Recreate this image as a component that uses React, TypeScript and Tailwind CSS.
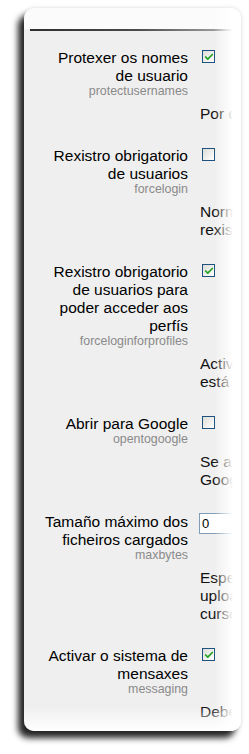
import { Check } from 'lucide-react'

interface Setting {
  label: string
  name: string
  kind: 'checkbox' | 'text'
  checked?: boolean
  value?: string
  description: string[]
}

const settings: Setting[] = [
  {
    label: 'Protexer os nomes de usuario',
    name: 'protectusernames',
    kind: 'checkbox',
    checked: true,
    description: ['Por defecto forgot_password.php non amosa pistas'],
  },
  {
    label: 'Rexistro obrigatorio de usuarios',
    name: 'forcelogin',
    kind: 'checkbox',
    description: [
      'Normalmente, a páxina principal e as listas de cursos poden lerse sen',
      'rexistrarse no sitio. Active esta opción para obrigar a identificarse.',
    ],
  },
  {
    label: 'Rexistro obrigatorio de usuarios para poder acceder aos perfís',
    name: 'forceloginforprofiles',
    kind: 'checkbox',
    checked: true,
    description: [
      'Active esta opción para obrigar a que o usuario',
      'está rexistrado antes de ver os perfís dos demais.',
    ],
  },
  {
    label: 'Abrir para Google',
    name: 'opentogoogle',
    kind: 'checkbox',
    description: [
      'Se activa esta opción, permitirá que o robot de',
      'Google entre no sitio como convidado.',
    ],
  },
  {
    label: 'Tamaño máximo dos ficheiros cargados',
    name: 'maxbytes',
    kind: 'text',
    value: '0',
    description: [
      'Especifica o tamaño máximo dos ficheiros que se poden',
      'uploaded ao sitio. Este valor está limitado polo PHP e',
      'curso a curso pode restrinxirse máis.',
    ],
  },
  {
    label: 'Activar o sistema de mensaxes',
    name: 'messaging',
    kind: 'checkbox',
    checked: true,
    description: ['Debe activarse o sistema de mensaxes entre usuarios?'],
  },
]

function Checkbox({ checked }: { checked?: boolean }) {
  return (
    <span className="ml-[14px] mt-[1px] flex size-[13px] shrink-0 items-center justify-center border border-[#1c5180] bg-gradient-to-br from-[#dcdcd7] to-white">
      {checked && (
        <Check size={10} strokeWidth={4} className="text-[#21a121]" />
      )}
    </span>
  )
}

function SettingRow({ setting }: { setting: Setting }) {
  return (
    <div className="py-3">
      <div className="flex items-start">
        <div className="ml-[16px] w-[148px] shrink-0 text-right">
          <label className="block text-[15.5px] leading-[18px] text-black">
            {setting.label}
          </label>
          <span className="block text-[12.4px] leading-[12px] text-[#8a8a8a]">
            {setting.name}
          </span>
        </div>
        {setting.kind === 'checkbox' ? (
          <Checkbox checked={setting.checked} />
        ) : (
          <div className="ml-[11px] flex h-[21px] w-[150px] shrink-0 items-center border border-[#7f9db9] bg-white pl-[2px] text-[13px] text-black">
            {setting.value}
          </div>
        )}
      </div>
      <div className="ml-[176px] mt-[8px] text-[15.5px] leading-[18px] text-[#111]">
        {setting.description.map((line) => (
          <div key={line} className="whitespace-nowrap">
            {line}
          </div>
        ))}
      </div>
    </div>
  )
}

export default function App() {
  return (
    <div className="h-[754px] bg-white pl-[24px] pt-[8px] font-['Liberation_Sans',Arial,sans-serif]">
      <div className="relative h-[723px] w-[217px] overflow-hidden rounded-[10px] bg-[#efefef] shadow-[-6px_7px_6px_rgba(0,0,0,0.85),0_0_4px_rgba(0,0,0,0.15)]">
        <div className="h-[21px] bg-[#fbfbfb]" />
        <div className="ml-[6px] h-[2px] bg-gradient-to-r from-[#2e2e2e] via-[#4a4a4a] to-[#b8b8b8]" />
        <div className="pt-[6px]">
          {settings.map((s) => (
            <SettingRow key={s.name} setting={s} />
          ))}
        </div>
        <div className="pointer-events-none absolute inset-y-0 right-0 w-[27px] bg-gradient-to-r from-transparent from-0% to-white to-70%" />
        <div className="pointer-events-none absolute inset-x-0 bottom-0 h-[24px] bg-gradient-to-b from-transparent to-white" />
      </div>
    </div>
  )
}
